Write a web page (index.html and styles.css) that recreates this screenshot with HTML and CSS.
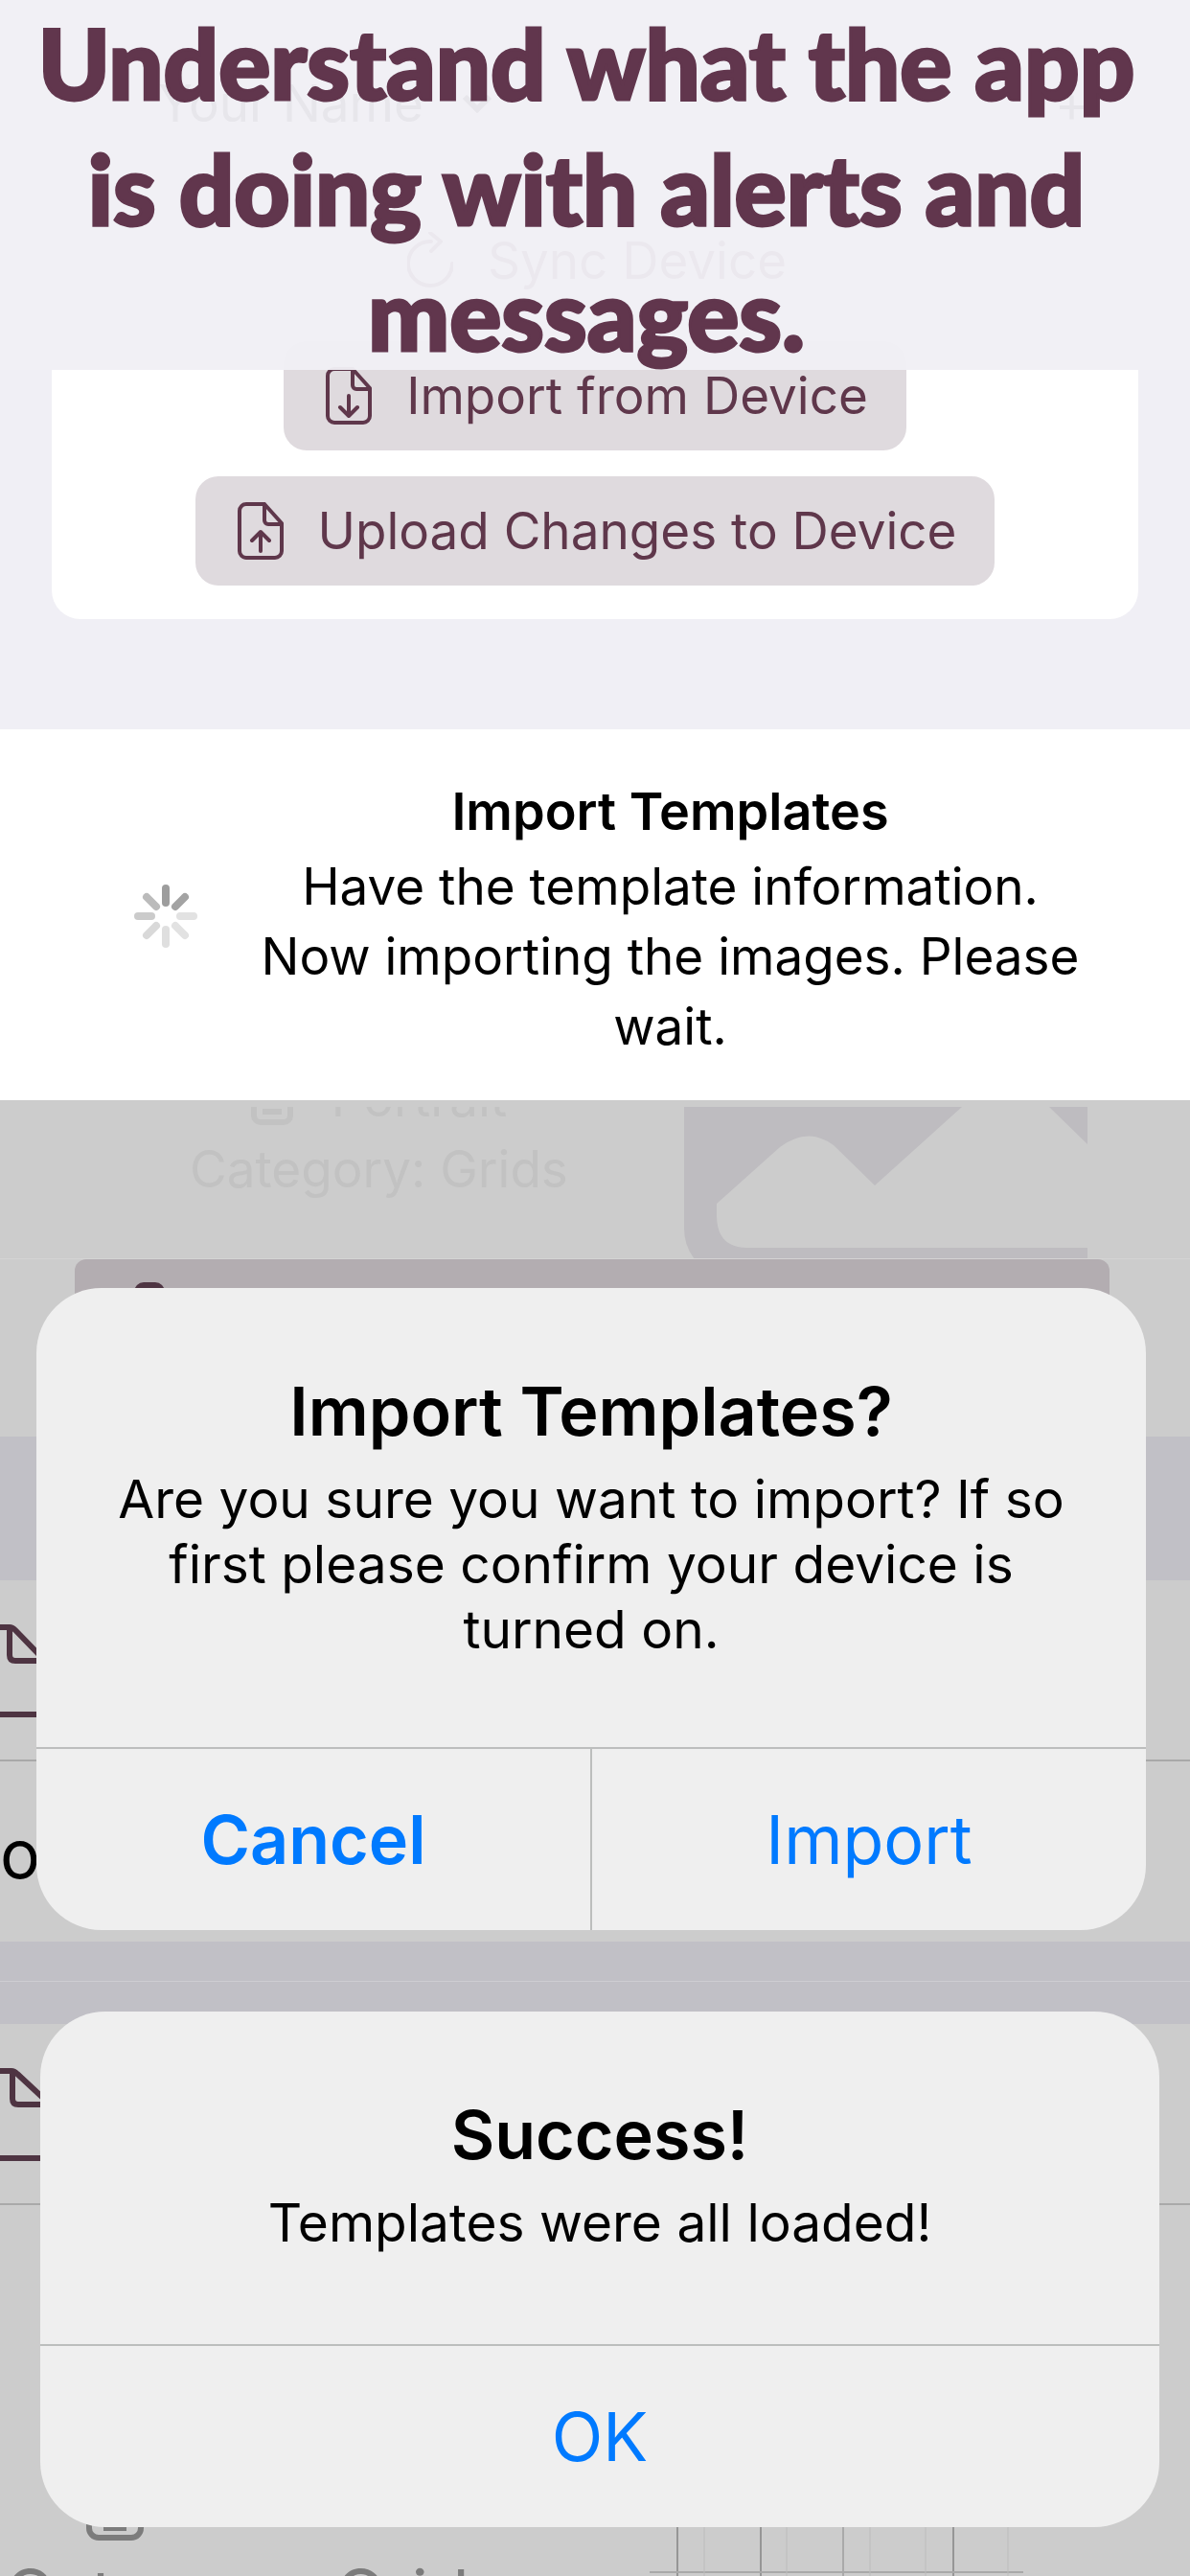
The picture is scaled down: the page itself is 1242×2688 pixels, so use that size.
FILE: index.html
```
<!DOCTYPE html>
<html lang="en">

<head>
  <meta charset="utf-8">
  <meta name="viewport" content="width=device-width, initial-scale=1">
  <link rel="stylesheet" href="styles.css">
  <title>Alerts and Messages</title>
</head>
<body>
  <!-- Sync screen with the caption over it -->
  <section class="layers sync">
    <div class="screen">
      <div class="nav">
        <span>Your Name</span>
        <svg class="chevron" viewBox="0 0 32 20"><path d="M3 3l13 13L29 3"/></svg>
        <button class="add" aria-label="Add">+</button>
      </div>
      <div class="card">
        <button class="tinted plain">
          <svg class="icon" viewBox="0 0 48 60"><path d="M25 10A23 23 0 1 0 47 33M24 1l11 9-10 10"/></svg>
          Sync Device
        </button>
        <button class="tinted">
          <svg class="icon" viewBox="0 0 48 60"><path d="M28 2H9a7 7 0 0 0-7 7v42a7 7 0 0 0 7 7h30a7 7 0 0 0 7-7V22L28 2v17a4 4 0 0 0 4 4h14M24 30v20M15 42l9 9 9-9"/></svg>
          Import from Device
        </button>
        <button class="tinted">
          <svg class="icon" viewBox="0 0 48 60"><path d="M28 2H9a7 7 0 0 0-7 7v42a7 7 0 0 0 7 7h30a7 7 0 0 0 7-7V22L28 2v17a4 4 0 0 0 4 4h14M24 51V31M15 40l9-9 9 9"/></svg>
          Upload Changes to Device
        </button>
      </div>
    </div>
    <h1 class="caption">Understand what the app is doing with alerts and messages.</h1>
  </section>

  <!-- Progress message -->
  <section class="progress" role="status">
    <svg class="spinner" viewBox="-34 -34 68 68">
      <path d="M0-14V-29" stroke="#9d9d9d"/>
      <path d="M10-10L20-20" stroke="#a3a3a3"/>
      <path d="M15 0H29" stroke="#e2e2e2"/>
      <path d="M10 10L20 20" stroke="#e2e2e2"/>
      <path d="M0 14V29" stroke="#dfdfdf"/>
      <path d="M-10 10L-20 20" stroke="#d9d9d9"/>
      <path d="M-15 0H-29" stroke="#cbcbcb"/>
      <path d="M-10-10L-20-20" stroke="#bbbbbb"/>
    </svg>
    <div class="progress-text">
      <h2>Import Templates</h2>
      <p>Have the template information. Now importing the images. Please wait.</p>
    </div>
  </section>

  <!-- Dimmed template row -->
  <section class="template">
    <div class="template-text">
      <div class="orientation">
        <svg class="portrait" viewBox="0 0 44 56"><rect x="3" y="3" width="38" height="50" rx="7"/><path d="M12 42h20"/></svg>
        <span>Portrait</span>
      </div>
      <div>Category: Grids</div>
    </div>
    <svg class="thumb" viewBox="0 0 421 159">
      <path fill="#bebcc0" d="M0 0H421V159H11Q0 145 0 127z"/>
      <path fill="#cccccc" d="M34 101L100 42Q129 20 156 40L199 82 290 0H381L421 39V147H66Q34 147 34 113z"/>
      <path fill="#999799" d="M11 158H421V159H11z"/>
    </svg>
  </section>

  <!-- Import confirmation -->
  <section class="layers confirm">
    <div class="backdrop">
      <div class="bar"><i class="nub"></i></div>
      <div class="band"></div>
      <div class="rows">
        <svg class="edge-icon" viewBox="0 0 38 104"><path d="M0 5H10Q13 5 16 8L44 37M10 5V34Q10 40 16 40H44M0 96H44"/></svg>
        <hr>
        <span class="edge-text">o</span>
      </div>
      <div class="band short"></div>
    </div>
    <div class="alert" role="alertdialog" aria-labelledby="import-title">
      <div class="alert-body">
        <h2 id="import-title">Import Templates?</h2>
        <p>Are you sure you want to import? If so first please confirm your device is turned on.</p>
      </div>
      <div class="alert-buttons">
        <button class="cancel">Cancel</button>
        <button>Import</button>
      </div>
    </div>
  </section>

  <!-- Success -->
  <section class="layers success">
    <div class="backdrop">
      <div class="band short"></div>
      <div class="rows">
        <svg class="edge-icon" viewBox="0 0 42 104"><path d="M0 5H12Q15 5 18 8L46 34M13 5V34Q13 40 19 40H46M0 96H46"/></svg>
        <hr>
      </div>
      <div class="page-grid">
        <div class="page-text">
          <svg class="portrait" viewBox="0 0 60 78"><rect x="3" y="3" width="54" height="72" rx="10"/><path d="M18 65h24"/></svg>
          <div>Category: Grids</div>
        </div>
        <svg class="lines" viewBox="0 0 390 150">
          <path stroke="#969696" stroke-width="2" d="M29 0V150M116 0V150M317 0V150"/>
          <path stroke="#a9a9a9" stroke-width="2" d="M202 0V150M0 91H390"/>
          <path stroke="#bcbcbc" stroke-width="1" d="M57 0V150M230 0V150M288 0V150M374 0V150M143 0V150"/>
        </svg>
      </div>
    </div>
    <div class="alert" role="alertdialog" aria-labelledby="success-title">
      <div class="alert-body">
        <h2 id="success-title">Success!</h2>
        <p>Templates were all loaded!</p>
      </div>
      <div class="alert-buttons">
        <button>OK</button>
      </div>
    </div>
  </section>
</body>

</html>
```
FILE: styles.css
```
* {
  box-sizing: border-box;
}

body {
  margin: 0;
  height: 100vh;
  display: flex;
  flex-direction: column;
  font-family: Inter, "Liberation Sans", sans-serif;
  font-size: 53px;
  color: #000;
  background-color: #cccccc;
  overflow: hidden;
}

h1, h2, p {
  margin: 0;
}

svg {
  display: block;
  flex: none;
}

button {
  font: inherit;
  border: none;
  background: none;
  cursor: pointer;
}

/* everything in .layers shares one grid cell */
.layers {
  display: grid;
  grid-template-columns: 100%;
}

.layers > * {
  grid-area: 1 / 1;
}

/* Sync screen */
.sync {
  height: 761px;
  background-color: #f0eff5;
}

.nav {
  display: flex;
  align-items: center;
  gap: 40px;
  height: 120px;
  margin-top: 48px;
  padding: 0 100px 0 165px;
}

.chevron {
  width: 32px;
  fill: none;
  stroke: #000;
  stroke-width: 6;
}

.add {
  margin-left: auto;
}

.card {
  display: flex;
  flex-direction: column;
  align-items: center;
  gap: 27px;
  margin: 47px 54px 0;
  padding-bottom: 35px;
  border-radius: 0 0 30px 30px;
  background-color: #fff;
}

.tinted {
  display: flex;
  align-items: center;
  gap: 36px;
  height: 114px;
  padding: 0 40px 0 44px;
  border-radius: 24px;
  background-color: #dfdade;
  color: #5f374b;
}

.plain {
  background: none;
}

.icon {
  width: 48px;
  height: 60px;
  fill: none;
  stroke: #5f374b;
  stroke-width: 4;
  stroke-linejoin: round;
  stroke-linecap: round;
}

.caption {
  z-index: 1;
  height: 386px;
  padding: 0 40px 0 22px;
  background-color: rgba(240, 239, 245, 0.96);
  color: #61364d;
  font-family: Lato, sans-serif;
  font-size: 101px;
  font-weight: 900;
  line-height: 131px;
  text-align: center;
  -webkit-text-stroke: 3px #61364d;
}

/* Progress */
.progress {
  display: flex;
  align-items: center;
  gap: 50px;
  height: 387px;
  padding: 3px 100px 0 139px;
  background-color: #fff;
}

.spinner {
  width: 68px;
  fill: none;
  stroke-width: 8;
  stroke-linecap: round;
}

.progress-text {
  flex: 1;
  text-align: center;
  line-height: 73px;
}

.progress-text h2 {
  font-size: 54px;
  font-weight: 600;
  line-height: 84px;
}

/* Template row */
.template {
  display: flex;
  justify-content: space-between;
  height: 166px;
  padding: 7px 107px 0 198px;
  border-bottom: 1px solid #d4d4d4;
  color: #c2c2c2;
  overflow: hidden;
}

.template-text {
  display: flex;
  flex-direction: column;
  justify-content: flex-end;
  height: 102px;
  line-height: 74px;
  overflow: hidden;
}

.orientation {
  display: flex;
  align-items: center;
  justify-content: center;
  gap: 40px;
}

.portrait {
  width: 44px;
  fill: none;
  stroke: currentColor;
  stroke-width: 6;
}

.thumb {
  width: 421px;
  height: 159px;
}

/* Dimmed screens behind the alerts */
.backdrop {
  height: 0;
  min-height: 100%;
  overflow: hidden;
}

.bar {
  height: 152px;
  margin: 0 84px 33px 78px;
  padding: 24px 62px;
  border-radius: 12px;
  background-color: #b3adb1;
}

.nub {
  display: block;
  width: 32px;
  height: 20px;
  border-radius: 10px;
  background-color: #4e3442;
}

.band {
  height: 150px;
  background-color: #c1c0c6;
}

.band.short {
  height: 44px;
}

.rows {
  height: 377px;
  padding-top: 44px;
}

.rows hr {
  height: 2px;
  margin: 39px 0 72px;
  border: none;
  background-color: #a9a9a9;
}

.edge-icon {
  height: 104px;
  fill: none;
  stroke: #4e3442;
  stroke-width: 6;
}

.edge-text {
  display: block;
  font-size: 70px;
  line-height: 50px;
}

/* Alerts */
.alert {
  z-index: 1;
  display: flex;
  flex-direction: column;
  border-radius: 68px;
  background-color: #efefef;
  overflow: hidden;
}

.confirm {
  height: 754px;
  border-bottom: 1px solid #cecdd2;
}

.confirm .alert {
  margin: 30px 46px 53px 38px;
}

.success {
  flex: 1;
  min-height: 0;
}

.success .alert {
  margin: 31px 32px 51px 42px;
}

.alert-body {
  flex: 1;
  padding: 86px 60px 0;
  font-size: 55px;
  text-align: center;
  line-height: 68px;
}

.alert-body h2 {
  margin-bottom: 14px;
  font-size: 70px;
  font-weight: 600;
  line-height: 86px;
}

.alert-buttons {
  display: flex;
  height: 191px;
  border-top: 2px solid #bcbebd;
}

.alert-buttons button {
  flex: 1;
  color: #007aff;
  font-size: 70px;
}

.alert-buttons button + button {
  border-left: 2px solid #bcbebd;
}

.alert-buttons .cancel {
  font-weight: 600;
}

/* Page under the last alert */
.page-grid {
  display: flex;
  justify-content: space-between;
  margin-top: 84px;
  padding: 0 174px 0 5px;
  color: #7c7c7c;
}

.page-text {
  font-size: 70px;
  line-height: 112px;
}

.page-text .portrait {
  width: 60px;
  margin-left: 85px;
}

.lines {
  width: 390px;
}
```
